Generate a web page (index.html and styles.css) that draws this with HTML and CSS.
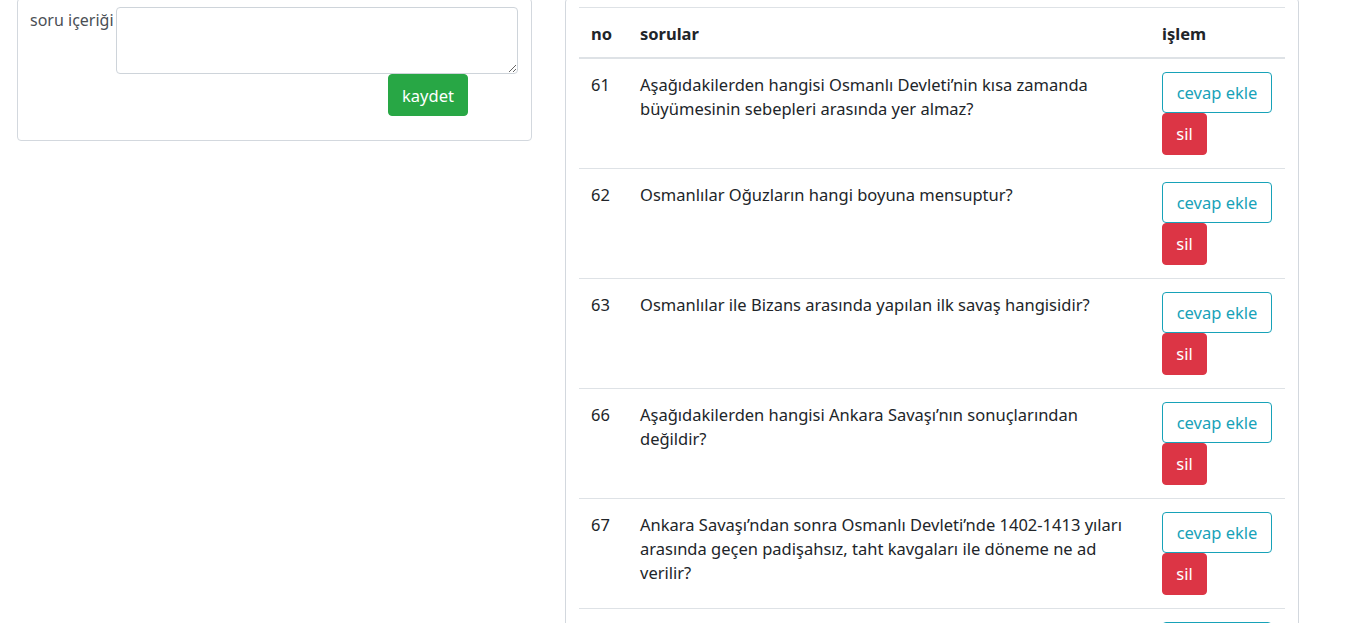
FILE: index.html
```html
<!DOCTYPE html>
<html lang="tr">
<head>
<meta charset="utf-8">
<title>Sorular</title>
<link rel="stylesheet" href="styles.css">
</head>
<body>
<div class="page">
  <div class="card card-form">
    <form class="form">
      <div class="form-row">
        <label class="form-label" for="soru">soru içeriği</label>
        <textarea id="soru" class="form-textarea"></textarea>
      </div>
      <div class="form-actions">
        <button type="button" class="btn btn-success">kaydet</button>
      </div>
    </form>
  </div>

  <div class="card card-table">
    <table class="table">
      <thead>
        <tr><th class="col-no">no</th><th class="col-q">sorular</th><th class="col-op">işlem</th></tr>
      </thead>
      <tbody>
        <tr>
          <td class="txt">61</td>
          <td class="txt"><div class="q">Aşağıdakilerden hangisi Osmanlı Devleti’nin kısa zamanda büyümesinin sebepleri arasında yer almaz?</div></td>
          <td><button class="btn btn-outline-info">cevap ekle</button><button class="btn btn-danger">sil</button></td>
        </tr>
        <tr>
          <td class="txt">62</td>
          <td class="txt"><div class="q">Osmanlılar Oğuzların hangi boyuna mensuptur?</div></td>
          <td><button class="btn btn-outline-info">cevap ekle</button><button class="btn btn-danger">sil</button></td>
        </tr>
        <tr>
          <td class="txt">63</td>
          <td class="txt"><div class="q">Osmanlılar ile Bizans arasında yapılan ilk savaş hangisidir?</div></td>
          <td><button class="btn btn-outline-info">cevap ekle</button><button class="btn btn-danger">sil</button></td>
        </tr>
        <tr>
          <td class="txt">66</td>
          <td class="txt"><div class="q">Aşağıdakilerden hangisi Ankara Savaşı’nın sonuçlarından değildir?</div></td>
          <td><button class="btn btn-outline-info">cevap ekle</button><button class="btn btn-danger">sil</button></td>
        </tr>
        <tr>
          <td class="txt">67</td>
          <td class="txt"><div class="q">Ankara Savaşı’ndan sonra Osmanlı Devleti’nde 1402-1413 yıları arasında geçen padişahsız, taht kavgaları ile döneme ne ad<br>verilir?</div></td>
          <td><button class="btn btn-outline-info">cevap ekle</button><button class="btn btn-danger">sil</button></td>
        </tr>
        <tr>
          <td class="txt">68</td>
          <td class="txt"><div class="q">Osmanlı Devleti’nde ilk düzenli ordu hangi padişah döneminde kurulmuştur?</div></td>
          <td><button class="btn btn-outline-info">cevap ekle</button><button class="btn btn-danger">sil</button></td>
        </tr>
      </tbody>
    </table>
  </div>
</div>
</body>
</html>
```
FILE: styles.css
```css
* { box-sizing: border-box; }
html, body { margin: 0; padding: 0; background: #fff; overflow: hidden; }
body {
  font-family: "Noto Sans", "Open Sans", sans-serif;
  font-size: 16.5px;
  line-height: 24px;
  color: #212529;
}
.page {
  display: flex;
  align-items: flex-start;
  gap: 33px;
  margin-top: -2px;
  padding-left: 17px;
}
.card {
  border: 1px solid #d3d8de;
  border-radius: 4px;
  background: #fff;
}
.card-form {
  width: 515px;
  padding: 8px 13px 24px 12px;
}
.form-row {
  display: flex;
  align-items: flex-start;
}
.form-label {
  width: 86px;
  flex: none;
  color: #4a4f55;
  font-size: 16px;
  padding-top: 1px;
  white-space: nowrap;
}
.form-textarea {
  width: 402px;
  height: 67px;
  border: 1px solid #ced4da;
  border-radius: 4px;
  margin: 0;
  padding: 6px 12px;
  font: inherit;
  resize: vertical;
  display: block;
}
.form-actions {
  padding-left: 358px;
}
.btn {
  display: block;
  font: inherit;
  line-height: 24px;
  border: 1px solid transparent;
  border-radius: 4px;
  padding: 0;
  text-align: center;
  cursor: pointer;
  background: none;
}
.btn-success {
  background: #28a745;
  border-color: #28a745;
  color: #fff;
  height: 42px;
  width: 80px;
  padding-top: 1px;
}
.card-table {
  width: 734px;
  padding: 8px 12px 0 13px;
  height: 700px;
}
.table {
  width: 706px;
  border-collapse: collapse;
}
.table th, .table td {
  text-align: left;
  vertical-align: top;
  border-top: 1px solid #dee2e6;
  padding: 13px 12px;
}
.table td.txt { padding-top: 14px; }
.table th {
  font-weight: 700;
  padding: 14px 12px 11px;
  border-bottom: 2px solid #dee2e6;
}
.col-no { width: 49px; }
.col-q { width: 522px; }
.col-op { width: 135px; }
.q { max-width: 490px; }
.btn-outline-info {
  color: #17a2b8;
  border-color: #17a2b8;
  background: #fff;
  height: 41px;
  width: 110px;
}
.btn-danger {
  background: #dc3545;
  border-color: #dc3545;
  color: #fff;
  height: 42px;
  width: 45px;
}
```
